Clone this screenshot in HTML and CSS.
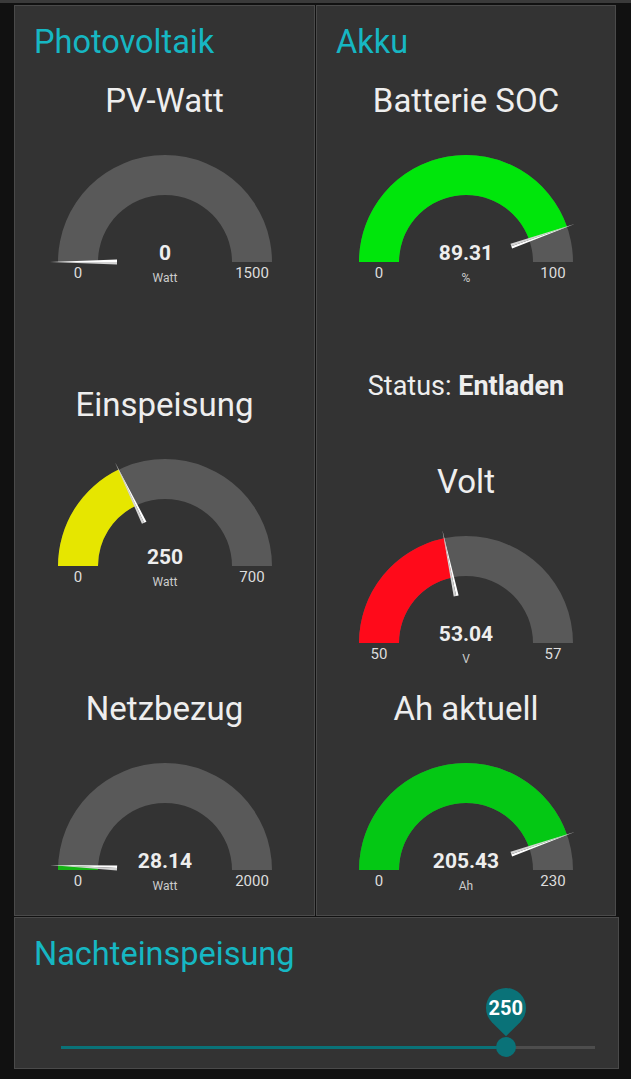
FILE: index.html
```html
<!DOCTYPE html>
<html lang="de">
<head>
    <meta charset="UTF-8">
    <meta name="viewport" content="width=device-width, initial-scale=1.0">
    <title>Energie</title>
    <link rel="stylesheet" href="styles.css">
</head>
<body>

    <div class="topbar"></div>

    <div class="page">
        <div class="row">

            <!-- Photovoltaik -->
            <section class="card card-left">
                <h2 class="card-title">Photovoltaik</h2>

                <div class="widget">
                    <div class="gauge-title">PV-Watt</div>
                    <svg class="gauge" viewBox="0 0 240 150" width="240" height="150">
                        <path class="arc-bg" d="M13 114 A107 107 0 0 1 227 114 L187 114 A67 67 0 0 0 53 114 Z"/>
                        <g transform="rotate(0 120 114)">
                            <polygon class="needle" points="72,111.5 72,114 5,114"/>
                            <polygon class="needle-shade" points="72,114 72,116.5 5,114"/>
                        </g>
                        <text class="g-value" x="120" y="112">0</text>
                        <text class="g-unit" x="120" y="134">Watt</text>
                        <text class="g-min" x="33" y="130">0</text>
                        <text class="g-max" x="207" y="130">1500</text>
                    </svg>
                </div>

                <div class="widget widget-next">
                    <div class="gauge-title">Einspeisung</div>
                    <svg class="gauge" viewBox="0 0 240 150" width="240" height="150">
                        <path class="arc-bg" d="M13 114 A107 107 0 0 1 227 114 L187 114 A67 67 0 0 0 53 114 Z"/>
                        <path class="arc-yellow" d="M13 114 A107 107 0 0 1 73.57 17.59 L90.93 53.63 A67 67 0 0 0 53 114 Z"/>
                        <g transform="rotate(64.29 120 114)">
                            <polygon class="needle" points="72,111.5 72,114 5,114"/>
                            <polygon class="needle-shade" points="72,114 72,116.5 5,114"/>
                        </g>
                        <text class="g-value" x="120" y="112">250</text>
                        <text class="g-unit" x="120" y="134">Watt</text>
                        <text class="g-min" x="33" y="130">0</text>
                        <text class="g-max" x="207" y="130">700</text>
                    </svg>
                </div>

                <div class="widget widget-next">
                    <div class="gauge-title">Netzbezug</div>
                    <svg class="gauge" viewBox="0 0 240 150" width="240" height="150">
                        <path class="arc-bg" d="M13 114 A107 107 0 0 1 227 114 L187 114 A67 67 0 0 0 53 114 Z"/>
                        <path class="arc-green-dark" d="M13 114 A107 107 0 0 1 13.10 109.27 L53.07 111.04 A67 67 0 0 0 53 114 Z"/>
                        <g transform="rotate(2.53 120 114)">
                            <polygon class="needle" points="72,111.5 72,114 5,114"/>
                            <polygon class="needle-shade" points="72,114 72,116.5 5,114"/>
                        </g>
                        <text class="g-value" x="120" y="112">28.14</text>
                        <text class="g-unit" x="120" y="134">Watt</text>
                        <text class="g-min" x="33" y="130">0</text>
                        <text class="g-max" x="207" y="130">2000</text>
                    </svg>
                </div>
            </section>

            <!-- Akku -->
            <section class="card card-right">
                <h2 class="card-title">Akku</h2>

                <div class="widget">
                    <div class="gauge-title">Batterie SOC</div>
                    <svg class="gauge" viewBox="0 0 240 150" width="240" height="150">
                        <path class="arc-bg" d="M13 114 A107 107 0 0 1 227 114 L187 114 A67 67 0 0 0 53 114 Z"/>
                        <path class="arc-green" d="M13 114 A107 107 0 0 1 221.02 78.73 L183.26 91.92 A67 67 0 0 0 53 114 Z"/>
                        <g transform="rotate(160.76 120 114)">
                            <polygon class="needle" points="72,111.5 72,114 5,114"/>
                            <polygon class="needle-shade" points="72,114 72,116.5 5,114"/>
                        </g>
                        <text class="g-value" x="120" y="112">89.31</text>
                        <text class="g-unit" x="120" y="134">%</text>
                        <text class="g-min" x="33" y="130">0</text>
                        <text class="g-max" x="207" y="130">100</text>
                    </svg>
                </div>

                <div class="status">Status: <b>Entladen</b></div>

                <div class="widget widget-volt">
                    <div class="gauge-title">Volt</div>
                    <svg class="gauge" viewBox="0 0 240 150" width="240" height="150">
                        <path class="arc-bg" d="M13 114 A107 107 0 0 1 227 114 L187 114 A67 67 0 0 0 53 114 Z"/>
                        <path class="arc-red" d="M13 114 A107 107 0 0 1 98.06 9.27 L106.26 48.42 A67 67 0 0 0 53 114 Z"/>
                        <g transform="rotate(78.17 120 114)">
                            <polygon class="needle" points="72,111.5 72,114 5,114"/>
                            <polygon class="needle-shade" points="72,114 72,116.5 5,114"/>
                        </g>
                        <text class="g-value" x="120" y="112">53.04</text>
                        <text class="g-unit" x="120" y="134">V</text>
                        <text class="g-min" x="33" y="130">50</text>
                        <text class="g-max" x="207" y="130">57</text>
                    </svg>
                </div>

                <div class="widget widget-ah">
                    <div class="gauge-title">Ah aktuell</div>
                    <svg class="gauge" viewBox="0 0 240 150" width="240" height="150">
                        <path class="arc-bg" d="M13 114 A107 107 0 0 1 227 114 L187 114 A67 67 0 0 0 53 114 Z"/>
                        <path class="arc-green-ah" d="M13 114 A107 107 0 0 1 221.03 78.76 L183.26 91.93 A67 67 0 0 0 53 114 Z"/>
                        <g transform="rotate(160.77 120 114)">
                            <polygon class="needle" points="72,111.5 72,114 5,114"/>
                            <polygon class="needle-shade" points="72,114 72,116.5 5,114"/>
                        </g>
                        <text class="g-value" x="120" y="112">205.43</text>
                        <text class="g-unit" x="120" y="134">Ah</text>
                        <text class="g-min" x="33" y="130">0</text>
                        <text class="g-max" x="207" y="130">230</text>
                    </svg>
                </div>
            </section>

        </div>

        <!-- Nachteinspeisung -->
        <section class="card card-wide">
            <h2 class="card-title">Nachteinspeisung</h2>
            <div class="slider">
                <div class="track"></div>
                <div class="track-fill" style="width: 83.3%"></div>
                <div class="thumb" style="left: 83.3%"></div>
                <div class="pin" style="left: 83.3%"><span class="pin-value">250</span></div>
            </div>
        </section>
    </div>

</body>
</html>
```

FILE: styles.css
```css
body {
    margin: 0;
    padding: 0;
    background-color: #111;
    font-family: Roboto, 'Liberation Sans', sans-serif;
    color: #eee;
}

.topbar {
    height: 3px;
    background-color: #3a3a3a;
}

.page {
    padding: 2px 0 0 14px;
}

.row {
    display: flex;
    gap: 1px;
}

.card {
    box-sizing: border-box;
    background-color: #333;
    border: 1px solid #4a4a4a;
    padding-top: 18px;
}

.card-left {
    width: 301px;
    height: 911px;
}

.card-right {
    width: 300px;
    height: 911px;
}

.card-wide {
    width: 605px;
    height: 152px;
    margin-top: 1px;
}

.card-title {
    margin: 0;
    padding-left: 19px;
    font-size: 32.5px;
    font-weight: 400;
    line-height: 36px;
    color: #16b7c3;
}

.widget {
    margin-top: 21px;
    text-align: center;
}

.widget-next {
    margin-top: 87px;
}

.widget-volt {
    margin-top: 61px;
}

.widget-ah {
    margin-top: 10px;
}

.gauge-title {
    font-size: 33px;
    font-weight: 400;
    line-height: 40px;
    color: #eee;
}

.gauge {
    display: block;
    margin: 27px auto 0;
}

.arc-bg {
    fill: #595959;
}

.arc-yellow {
    fill: #e6e600;
}

.arc-red {
    fill: #ff0a1a;
}

.arc-green {
    fill: #00e60b;
}

.arc-green-ah {
    fill: #04c814;
}

.arc-green-dark {
    fill: #14b414;
}

.needle {
    fill: #fff;
}

.needle-shade {
    fill: #d4d4d4;
}

.g-value {
    font-family: Roboto, 'Liberation Sans', sans-serif;
    font-size: 21px;
    font-weight: 700;
    fill: #eee;
    text-anchor: middle;
}

.g-unit {
    font-family: Roboto, 'Liberation Sans', sans-serif;
    font-size: 12px;
    fill: #ccc;
    text-anchor: middle;
}

.g-min,
.g-max {
    font-family: Roboto, 'Liberation Sans', sans-serif;
    font-size: 15px;
    fill: #ddd;
    text-anchor: middle;
}

.status {
    margin-top: 73px;
    font-size: 27px;
    line-height: 30px;
    text-align: center;
    color: #eee;
}

.status b {
    font-weight: 700;
}

/* slider */

.slider {
    position: relative;
    height: 20px;
    margin: 65px 23px 0 46px;
}

.track {
    position: absolute;
    left: 0;
    right: 0;
    top: 9px;
    height: 3px;
    background-color: #4d4d4d;
}

.track-fill {
    position: absolute;
    left: 0;
    top: 9px;
    height: 3px;
    background-color: #0a7278;
}

.thumb {
    position: absolute;
    top: 0;
    width: 20px;
    height: 20px;
    margin-left: -10px;
    border-radius: 50%;
    background-color: #0a7278;
}

.pin {
    position: absolute;
    top: -49px;
    width: 40px;
    height: 40px;
    margin-left: -20px;
}

.pin::before {
    content: "";
    position: absolute;
    left: 0;
    top: 0;
    width: 40px;
    height: 40px;
    border-radius: 50% 50% 0 50%;
    background-color: #0a7278;
    transform: rotate(45deg);
}

.pin-value {
    position: relative;
    display: block;
    font-size: 20px;
    font-weight: 700;
    line-height: 40px;
    text-align: center;
    color: #fff;
}
```
